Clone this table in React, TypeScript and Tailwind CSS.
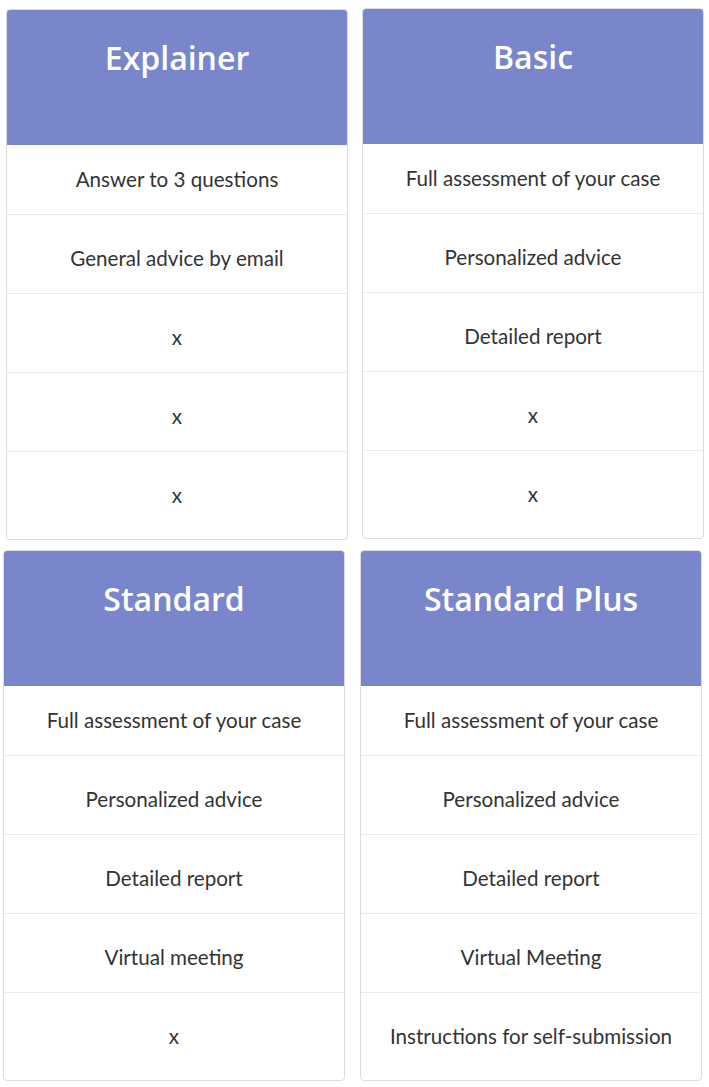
import React from "react"

type Plan = {
  title: string
  items: string[]
}

const plans: Plan[] = [
  { title: "Explainer", items: ["Answer to 3 questions", "General advice by email", "x", "x", "x"] },
  { title: "Basic", items: ["Full assessment of your case", "Personalized advice", "Detailed report", "x", "x"] },
  { title: "Standard", items: ["Full assessment of your case", "Personalized advice", "Detailed report", "Virtual meeting", "x"] },
  {
    title: "Standard Plus",
    items: ["Full assessment of your case", "Personalized advice", "Detailed report", "Virtual Meeting", "Instructions for self-submission"],
  },
]

function PlanCard({ plan, className = "" }: { plan: Plan; className?: string }) {
  return (
    <div className={"w-[342px] shrink-0 rounded-[4px] border border-[#dcdcdc] bg-white pb-[9px] " + className}>
      <div className="h-[135px] rounded-t-[3px] bg-[#7986cb] pt-[26px] text-center">
        <h2 className="font-['Open_Sans',sans-serif] text-[32px] leading-[44px] font-semibold text-white">
          {plan.title}
        </h2>
      </div>
      <ul className="font-['Lato',sans-serif] text-[20.6px] leading-6 font-normal text-[#333333]">
        {plan.items.map((item, i) => (
          <li
            key={i}
            className={
              i === 0
                ? "pt-[22px] pb-[23px] text-center"
                : "border-t border-[#ececec] pt-[31px] pb-[23px] text-center"
            }
          >
            {item}
          </li>
        ))}
      </ul>
    </div>
  )
}

export default function App() {
  return (
    <div className="min-h-[1087px] w-[709px] bg-white">
      <div className="flex items-start gap-[14px] pt-[8px] pl-[6px]">
        <PlanCard plan={plans[0]} className="mt-px" />
        <PlanCard plan={plans[1]} />
      </div>
      <div className="flex items-start gap-[15px] pt-[10px] pl-[3px]">
        <PlanCard plan={plans[2]} />
        <PlanCard plan={plans[3]} />
      </div>
    </div>
  )
}
